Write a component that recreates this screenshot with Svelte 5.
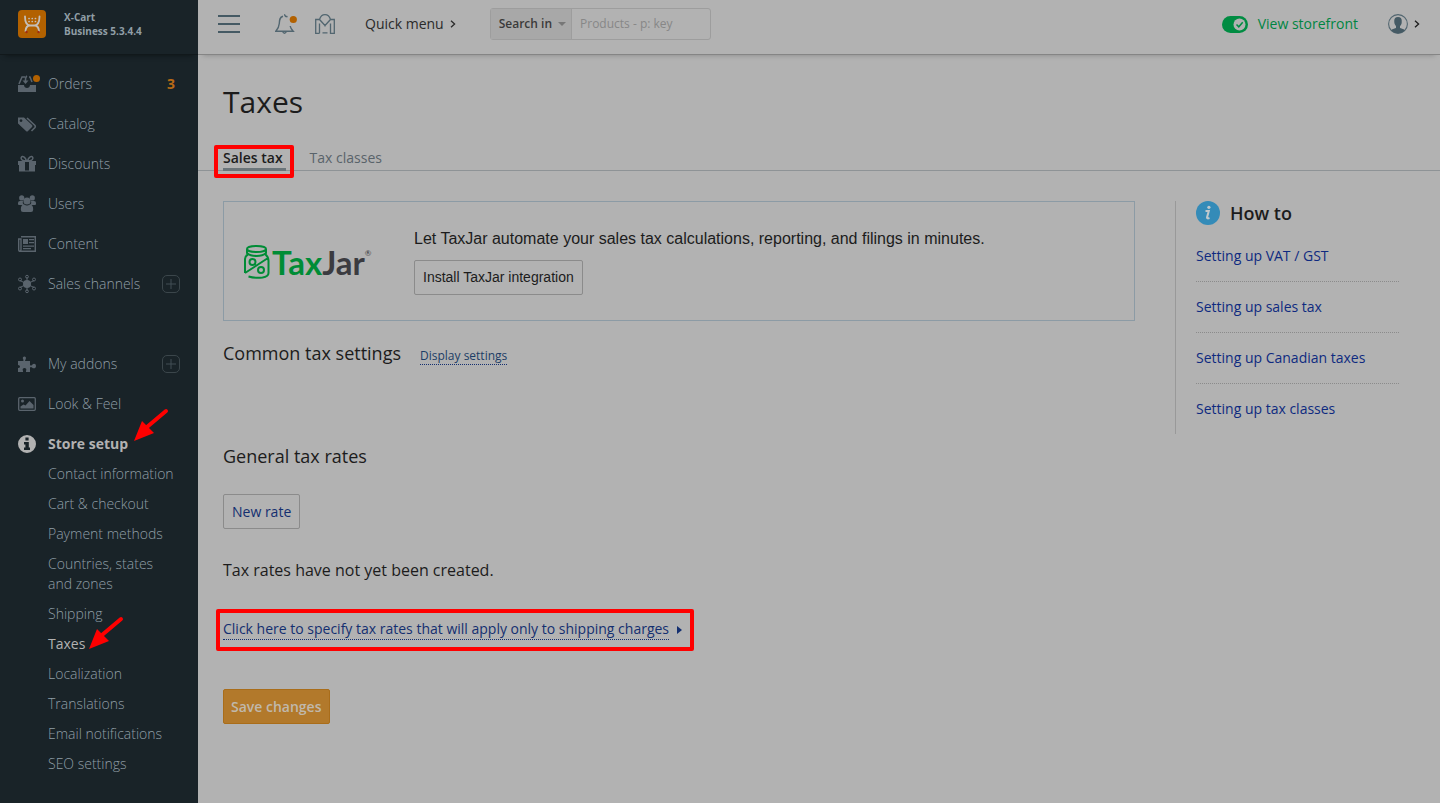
<script>
  const topItems = [
    { icon: 'orders', label: 'Orders', count: 3 },
    { icon: 'catalog', label: 'Catalog' },
    { icon: 'gift', label: 'Discounts' },
    { icon: 'users', label: 'Users' },
    { icon: 'content', label: 'Content' },
    { icon: 'channels', label: 'Sales channels', add: true }
  ];
  const bottomItems = [
    { icon: 'addons', label: 'My addons', add: true },
    { icon: 'look', label: 'Look & Feel' },
    { icon: 'setup', label: 'Store setup', active: true }
  ];
  const setupItems = [
    'Contact information',
    'Cart & checkout',
    'Payment methods',
    'Countries, states and zones',
    'Shipping',
    'Taxes',
    'Localization',
    'Translations',
    'Email notifications',
    'SEO settings'
  ];
  const howTo = ['VAT / GST', 'sales tax', 'Canadian taxes', 'tax classes'];
</script>

{#snippet glyph(name)}
  <svg class="glyph" viewBox="0 0 18 18" width="18" height="18" aria-hidden="true">
    {#if name === 'orders'}
      <path d="M0 10h6c0 4 6 4 6 0h6v7H0z" />
      <path d="M1 9 4 2h3M11 2h1l2 5M9 1C7 2 7.500 4 7.500 7" fill="none" stroke="currentColor" stroke-width="1.500" />
      <path d="M4.500 5.500h6L7.500 9z" />
      <circle class="dot" cx="18.500" cy="3.500" r="3.500" />
    {:else if name === 'catalog'}
      <path fill-rule="evenodd" d="M0 2.500h6L14 10q1 1 0 2l-4 4q-1 1-2 0L0 8.500zM3 4.200a1.400 1.400 0 1 0 .01 0z" />
      <path d="M9 3l8 7.500q.7 1 0 2L13.500 16" fill="none" stroke="currentColor" stroke-width="1.600" />
    {:else if name === 'gift'}
      <path fill-rule="evenodd" d="M0 6h18v4h-1v6.500H1V10H0zM7 7v8.500h4V7z" />
      <path d="M8.500 6C5 6 2.500 5 3.200 2.500 4.200 0 7.500 2 8.500 6zM9.500 6C13 6 15.500 5 14.800 2.500 13.800 0 10.500 2 9.500 6z" fill="none" stroke="currentColor" stroke-width="1.500" />
    {:else if name === 'users'}
      <circle cx="3.700" cy="2.900" r="2.600" /><circle cx="14.300" cy="2.900" r="2.600" />
      <path d="M0 9.500V8q0-2 2-2h3q-1 2 1 4H1q-1 0-1-1zM18 9.500V8q0-2-2-2h-3q1 2-1 4h5q1 0 1-1z" />
      <circle cx="9" cy="6" r="3.600" />
      <path d="M2.800 14.500q0-5 3.400-5 2.800 1.800 5.600 0 3.400 0 3.400 5 0 2.500-2.200 2.500H5q-2.200 0-2.200-2.500z" />
    {:else if name === 'content'}
      <path d="M3 1.700h14.300v14.600H2.200q-1.500 0-1.500-1.500V4H3v10.500q0 1.500-1 1.500" fill="none" stroke="currentColor" stroke-width="1.400" />
      <path d="M5 4h5v5H5zM11 4h5v1.200h-5zM11 7h5v1.200h-5zM5 10.500h11v1.200H5zM5 13h8v1.200H5z" />
    {:else if name === 'channels'}
      <circle cx="9" cy="9" r="4" />
      <g fill="none" stroke="currentColor">
        <path d="M9 2v14M2 5.500l14 7M2 12.500l14-7" />
        <circle cx="9" cy="1.700" r="1.400" /><circle cx="9" cy="16.300" r="1.400" />
        <circle cx="2" cy="4.500" r="1.500" /><circle cx="16" cy="4.500" r="1.500" />
        <circle cx="2" cy="13.500" r="1.500" /><circle cx="16" cy="13.500" r="1.500" />
      </g>
    {:else if name === 'addons'}
      <path d="M0 6h5q1-.5.3-1.500C3 1 9 0 7.800 4 6.500 6 7 6 8 6h4v4q1 1 2 0c1.500-2 4-1.500 4 1s-2.500 3-4 1.500q-1-1-2 0V17H8v-1c2-4-5-4-3 0v1H0v-4q2 0 2-1.500T0 10z" />
    {:else if name === 'look'}
      <rect x=".7" y="2.700" width="16.600" height="12.600" rx="1" fill="none" stroke="currentColor" stroke-width="1.300" />
      <circle cx="4.500" cy="6" r="1.500" />
      <path d="M2.500 13.500v-2l3-2 2 1L11.500 6l4 4v3.500z" />
    {:else if name === 'setup'}
      <path fill-rule="evenodd" d="M9 0a9 9 0 1 0 0 18A9 9 0 0 0 9 0zM7.400 2.500h3.200v3H7.400zM6 7h4.800v5.500H12V15H6v-2.500h1.400v-3H6z" />
    {/if}
  </svg>
{/snippet}

{#snippet arrow(kind)}
  <svg class="arrow {kind}" viewBox="0 0 36 36" width="36" height="36" aria-hidden="true">
    <path d="M33 3 14 19" stroke="#f00" stroke-width="4" stroke-linecap="round" />
    <path d="M1 33 9 13 21 25z" fill="#f00" />
  </svg>
{/snippet}

{#snippet chevron()}
  <svg class="chevron" viewBox="0 0 6 8" width="6" height="8" aria-hidden="true">
    <path d="M1 .7 4.600 4 1 7.300" fill="none" stroke="currentColor" stroke-width="1.300" />
  </svg>
{/snippet}

{#snippet navItem(item)}
  <li class="item" class:active={item.active}>
    <a href="#nav">{@render glyph(item.icon)}<span>{item.label}</span></a>
    {#if item.count}<b class="count">{item.count}</b>{/if}
    {#if item.add}
      <button class="add" aria-label="Add to {item.label}">
        <svg viewBox="0 0 10 10" width="10" height="10"><path d="M5 0v10M0 5h10" stroke="currentColor" /></svg>
      </button>
    {/if}
    {#if item.active}{@render arrow('to-setup')}{/if}
  </li>
{/snippet}

<div class="app">
  <aside class="sidebar">
    <div class="brand">
      <svg viewBox="0 0 28 28" width="28" height="28" aria-hidden="true">
        <rect width="28" height="28" rx="4" fill="#b26100" />
        <g fill="none" stroke="#c4bfb8" stroke-width="1.800" stroke-linecap="round">
          <path d="M7 6.500q0 8.500 5 9h4.500q5-.5 5-9M12 15.500q-4 0-4.500 5.500M16.500 15.500q4 0 4.500 5.500" />
          <path d="M11 8.500h7M11 11.500h7" stroke-width="1.700" stroke-dasharray="0.100 3.100" />
        </g>
        <circle cx="8.500" cy="22" r="1.200" fill="#a02c10" /><circle cx="20.500" cy="22" r="1.200" fill="#a02c10" />
      </svg>
      <div>X-Cart<br />Business 5.3.4.4</div>
    </div>
    <nav>
      <ul>{#each topItems as item}{@render navItem(item)}{/each}</ul>
      <ul>{#each bottomItems as item}{@render navItem(item)}{/each}</ul>
      <ul class="sub">
        {#each setupItems as label}
          <li class:current={label === 'Taxes'}>
            <a href="#sub">{label}</a>
            {#if label === 'Taxes'}{@render arrow('to-taxes')}{/if}
          </li>
        {/each}
      </ul>
    </nav>
  </aside>

  <div class="page">
    <header>
      <button class="plain menu" aria-label="Menu">
        <svg viewBox="0 0 22 18" width="22" height="18"><path d="M0 1h22M0 9h22M0 17h22" stroke="#455a64" stroke-width="2" /></svg>
      </button>
      <button class="plain bell" aria-label="Notifications">
        <svg viewBox="0 0 22 20" width="22" height="20" fill="none" stroke="#526670" stroke-width="1.400">
          <path d="M8 2.200C4.500 3 4.500 6 4.300 9.500 4 13 3 15 .8 17.300h17.400C16.500 15.500 15.500 14 15.200 12M7.500 17.500q2 3.500 4 0M9 .8q1 0 1.500 1.500l2 .5" />
          <circle cx="18.300" cy="5.500" r="3.600" fill="#b26100" stroke="none" />
        </svg>
      </button>
      <button class="plain market" aria-label="Marketplace">
        <svg viewBox="0 0 20 20" width="20" height="20" fill="none" stroke="#526670" stroke-width="1.300">
          <path d="M4.500 19.300H.7V5.500h3.800L10 11.500l5.500-6h3.800v13.800h-3.800V9.500M4.500 9.500v9.800M4.500 5.500q1.500-4.800 5.500-4.800t5.500 4.800M7.500 18.800h5M10 11.500v1" />
        </svg>
      </button>
      <button class="plain quick">Quick menu {@render chevron()}</button>
      <form class="search">
        <button type="button">Search in <i></i></button>
        <input type="text" aria-label="Search products" placeholder="Products - p: key" />
      </form>
      <a class="store" href="#store">
        <svg viewBox="0 0 26 17" width="26" height="17" aria-hidden="true">
          <rect width="26" height="17" rx="8.500" fill="#008c42" />
          <circle cx="17.500" cy="8.500" r="6" fill="#b2b2b2" />
          <path d="m14.500 8.500 2.300 2.300 3.900-4.500" fill="none" stroke="#008c42" stroke-width="1.500" />
        </svg>
        View storefront
      </a>
      <button class="plain account" aria-label="Account">
        <svg viewBox="0 0 20 20" width="20" height="20">
          <circle cx="10" cy="10" r="9.400" fill="none" stroke="#526670" stroke-width="1.100" />
          <path d="M10 3c-3 0-4 2-3.700 4.500-.2 2.500.8 3.500 1.700 4.500v2c-2 1-4 1-5 2.500a10 10 0 0 0 14 0C16 15 14 15 12 14v-2c1-1 1.900-2 1.700-4.500C14 5 13 3 10 3z" fill="#455a64" />
        </svg>
        {@render chevron()}
      </button>
    </header>

    <h1>Taxes</h1>
    <nav class="tabs">
      <a class="selected marked" href="#sales">Sales tax</a>
      <a href="#classes">Tax classes</a>
    </nav>

    <div class="columns">
      <main>
        <section class="promo">
          <div class="logo">
            <svg viewBox="0 0 26 34" width="26" height="34" fill="none" stroke="#008c36" stroke-width="2" aria-hidden="true">
              <ellipse cx="12.500" cy="4" rx="9.500" ry="3" />
              <path d="M3 4v4q3 3 9.500 3T22 8V4M4 9.500Q1 11 1 14v14M1 28 24 13M21.500 9.500Q24.500 12 24.500 16v12q0 3.500-6 4.500-7 1-14-1" />
              <circle cx="8.500" cy="17" r="3" /><circle cx="17" cy="25" r="3" />
            </svg>
            <span class="tax">Tax</span><span>Jar</span><sup>®</sup>
          </div>
          <div>
            <p>Let TaxJar automate your sales tax calculations, reporting, and filings in minutes.</p>
            <button class="outline install">Install TaxJar integration</button>
          </div>
        </section>
        <div class="common">
          <h2>Common tax settings</h2>
          <a class="dotted small" href="#display">Display settings</a>
        </div>
        <h2>General tax rates</h2>
        <button class="outline rate">New rate</button>
        <p class="empty">Tax rates have not yet been created.</p>
        <div class="shipping marked">
          <a class="dotted" href="#shipping">Click here to specify tax rates that will apply only to shipping charges</a><i></i>
        </div>
        <button class="save">Save changes</button>
      </main>
      <aside class="help">
        <h3>
          <svg viewBox="0 0 24 24" width="24" height="24" aria-hidden="true">
            <circle cx="12" cy="12" r="12" fill="#348bb8" />
            <path d="M9.500 10h3.300l-1.800 6.500q0 1.500 2.500.5" fill="none" stroke="#c0c8cc" stroke-width="2" />
            <circle cx="12.900" cy="6.300" r="1.600" fill="#c0c8cc" />
          </svg>
          How to
        </h3>
        <ul>{#each howTo as topic}<li><a href="#help">Setting up {topic}</a></li>{/each}</ul>
      </aside>
    </div>
  </div>
</div>

<style>
  :global(body) { margin: 0; background: #b2b2b2; }
  .app {
    display: flex;
    min-height: 100vh;
    font: 14px/20px "Open Sans", sans-serif;
    color: #1c1c1c;
    background: #b2b2b2;
  }
  .app * { box-sizing: border-box; }
  ul { list-style: none; margin: 0; padding: 0; }
  a { color: inherit; text-decoration: none; }
  button, input { font: inherit; color: inherit; margin: 0; }
  h1, h2, h3, p { margin: 0; font-weight: 400; }
  svg { flex: none; }

  .sidebar { flex: none; width: 198px; background: #192328; color: #909ea6; }
  .brand {
    display: flex;
    align-items: center;
    gap: 18px;
    height: 55px;
    padding: 0 18px 7px;
    border-bottom: 1px solid #11181b;
    box-shadow: 0 5px 5px -5px #0c1113;
    font-size: 10px;
    line-height: 14px;
    font-weight: 700;
  }
  .sidebar nav { padding: 14px 18px; }
  .sidebar nav ul + ul { margin-top: 50px; }
  .sidebar nav ul + .sub { margin: 0 0 0 30px; }
  .item { position: relative; display: flex; align-items: center; height: 30px; }
  .item + .item { margin-top: 10px; }
  .item a { display: flex; align-items: center; gap: 12px; flex: 1; font-weight: 300; }
  .glyph { fill: currentColor; color: #5a646d; overflow: visible; }
  .dot { fill: #b26100; }
  .count { color: #b86a16; margin-right: 5px; }
  .add {
    display: flex;
    align-items: center;
    justify-content: center;
    width: 18px;
    height: 18px;
    padding: 0;
    color: #434e54;
    background: none;
    border: 1px solid #3b464b;
    border-radius: 5px;
  }
  .active a { font-weight: 700; color: #b2b2b2; }
  .active .glyph { color: #b2b2b2; }
  .sub li { position: relative; padding: 5px 0; font-weight: 300; }
  .sub .current { color: #b2b2b2; font-weight: 400; }
  .arrow { position: absolute; overflow: visible; pointer-events: none; }
  .to-setup { left: 115px; top: -21px; }
  .to-taxes { left: 40px; top: -13px; }

  .page { flex: 1; min-width: 0; }
  header {
    display: flex;
    align-items: center;
    height: 55px;
    padding: 0 20px 6px;
    border-bottom: 1px solid #858585;
    box-shadow: 0 5px 5px -5px #858585;
  }
  .plain { display: flex; align-items: center; padding: 0; border: 0; background: none; }
  .bell { margin-left: 35px; }
  .market { margin-left: 18px; }
  .quick { margin-left: 30px; gap: 6px; color: #2a2a2a; }
  .search {
    display: flex;
    width: 221px;
    height: 32px;
    margin-left: 34px;
    font-size: 12px;
    border: 1px solid #9d9d9d;
    border-radius: 3px;
  }
  .search button {
    flex: none;
    display: flex;
    align-items: center;
    gap: 6px;
    padding: 0 5px 0 8px;
    background: #a8a8a8;
    border: 0;
    border-right: 1px solid #9d9d9d;
    font-weight: 600;
    color: #3a3a3a;
  }
  .search i { border: 4px solid transparent; border-top-color: #777; border-bottom: 0; }
  .search input { flex: 1; min-width: 0; padding: 0 8px; border: 0; background: none; }
  .search input::placeholder { color: #878787; opacity: 1; }
  .store { display: flex; align-items: center; gap: 10px; margin-left: auto; color: #008542; }
  .account { margin-left: 30px; gap: 6px; }

  h1 { padding: 26px 25px 0; font-size: 30px; line-height: 42px; }
  .tabs {
    display: flex;
    gap: 24px;
    margin-top: 23px;
    padding: 0 25px;
    height: 25px;
    border-bottom: 1px solid #8e9396;
    color: #59636a;
  }
  .tabs a { line-height: 24px; height: 25px; }
  .tabs .selected {
    position: relative;
    padding-right: 3px;
    border-bottom: 3px solid #6b757a;
    color: #1c1c1c;
    font-weight: 600;
  }
  .marked::after {
    content: "";
    position: absolute;
    border: 4px solid #f00;
    border-radius: 2px;
    pointer-events: none;
  }
  .tabs .marked::after { inset: -1px -8px -10px -9px; }

  .columns { display: flex; gap: 40px; align-items: flex-start; padding: 30px 40px 30px 25px; }
  main { flex: 1; min-width: 0; }
  .promo {
    display: flex;
    align-items: center;
    gap: 40px;
    height: 120px;
    padding: 2px 20px 0;
    border: 1px solid #8c9ba5;
    font-family: "Liberation Sans", sans-serif;
  }
  .promo p { font-size: 16px; margin-bottom: 11px; }
  .logo {
    display: flex;
    align-items: center;
    width: 130px;
    font: 700 33px/34px Lato, sans-serif;
    color: #3b3b40;
  }
  .logo .tax { margin-left: 2px; color: #008c36; }
  .logo sup { align-self: flex-start; font-size: 8px; line-height: 16px; font-weight: 400; }
  .outline, .save { display: block; height: 35px; border-radius: 2px; }
  .outline { padding: 0 8px; background: none; border: 1px solid #8b8b8b; }
  .install { padding-bottom: 2px; }
  .common { display: flex; align-items: baseline; gap: 19px; margin: 19px 0 77px; }
  h2 { font-size: 18px; line-height: 26px; }
  .dotted, .rate { color: #142f70; }
  .dotted { border-bottom: 1px dotted #142f70; }
  .small { font-size: 12px; line-height: 17px; color: #1c3d66; }
  .rate { margin-top: 25px; }
  .empty { margin: 31px 0 39px; font-size: 16px; }
  .shipping { position: relative; display: flex; align-items: center; gap: 8px; width: fit-content; }
  .shipping i { border: 4px solid transparent; border-left: 5px solid #142f70; border-right: 0; }
  .shipping::after { inset: -10px -12px -11px -7px; }
  .save { padding: 0 7px; margin-top: 49px; background: #b2792b; border: 1px solid #a96d1a; color: #c0b8ab; font-weight: 600; }

  .help { flex: none; width: 225px; padding: 0 1px 0 20px; border-left: 1px solid #999; }
  h3 { display: flex; align-items: center; gap: 10px; margin-bottom: 5px; font-size: 18px; line-height: 24px; font-weight: 600; }
  .help li { height: 51px; padding-top: 15px; color: #0e2a80; }
  .help li:first-child { padding-top: 16px; }
  .help li + li { border-top: 1px dotted #8b8b8b; }
</style>
